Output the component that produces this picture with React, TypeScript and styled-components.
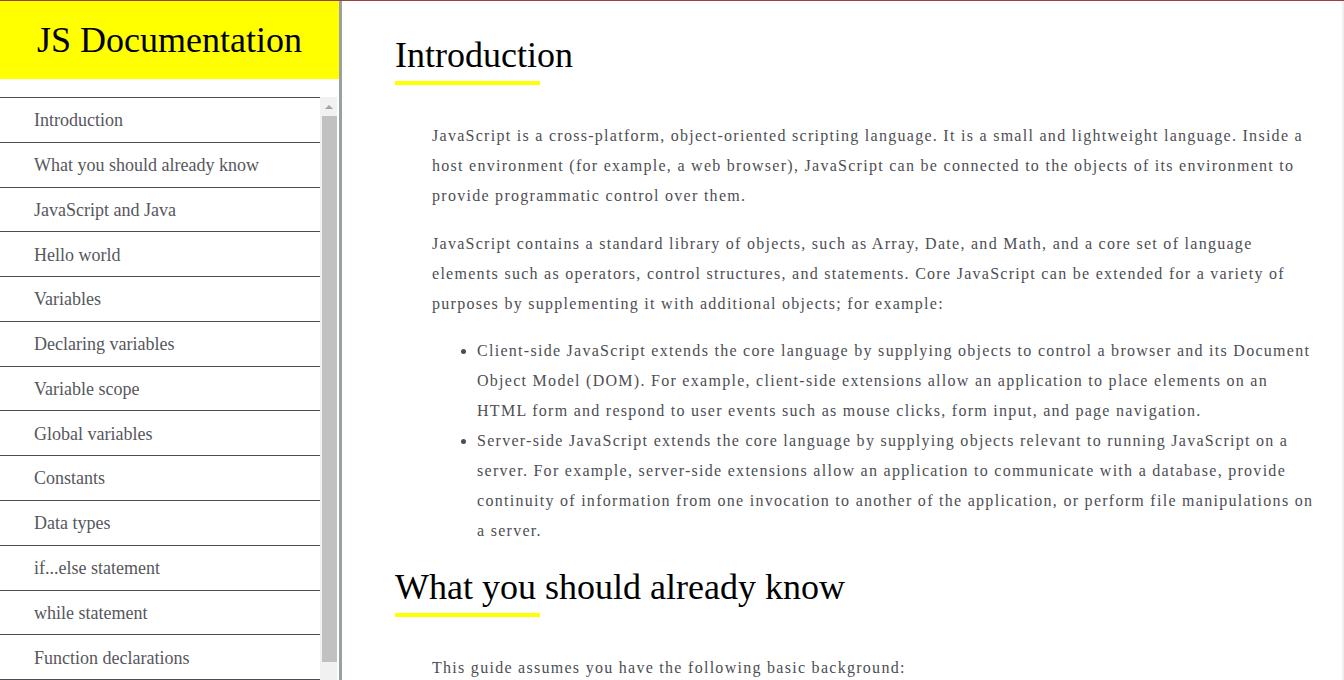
import React from "react";
import styled, { createGlobalStyle } from "styled-components";

const GlobalStyle = createGlobalStyle`
  html, body {
    margin: 0;
    padding: 0;
    overflow: hidden;
  }
  body {
    font-family: "Liberation Serif", "Times New Roman", serif;
    background: #fff;
  }
`;

const navLinks = [
  "Introduction",
  "What you should already know",
  "JavaScript and Java",
  "Hello world",
  "Variables",
  "Declaring variables",
  "Variable scope",
  "Global variables",
  "Constants",
  "Data types",
  "if...else statement",
  "while statement",
  "Function declarations",
  "Reference",
];

type Section = {
  title: string;
  paragraphs: string[];
  list?: string[];
};

const sections: Section[] = [
  {
    title: "Introduction",
    paragraphs: [
      "JavaScript is a cross-platform, object-oriented scripting language. It is a small and lightweight language. Inside a host environment (for example, a web browser), JavaScript can be connected to the objects of its environment to provide programmatic control over them.",
      "JavaScript contains a standard library of objects, such as Array, Date, and Math, and a core set of language elements such as operators, control structures, and statements. Core JavaScript can be extended for a variety of purposes by supplementing it with additional objects; for example:",
    ],
    list: [
      "Client-side JavaScript extends the core language by supplying objects to control a browser and its Document Object Model (DOM). For example, client-side extensions allow an application to place elements on an HTML form and respond to user events such as mouse clicks, form input, and page navigation.",
      "Server-side JavaScript extends the core language by supplying objects relevant to running JavaScript on a server. For example, server-side extensions allow an application to communicate with a database, provide continuity of information from one invocation to another of the application, or perform file manipulations on a server.",
    ],
  },
  {
    title: "What you should already know",
    paragraphs: ["This guide assumes you have the following basic background:"],
    list: [
      "A general understanding of the Internet and the World Wide Web (WWW).",
      "Good working knowledge of HyperText Markup Language (HTML).",
      "Some programming experience. If you are new to programming, try one of the tutorials linked on the main page about JavaScript.",
    ],
  },
];

const Page = styled.div`
  display: flex;
  height: 100vh;
  box-sizing: border-box;
  border-top: 1px solid #9e403b;
  overflow: hidden;
`;

const Sidebar = styled.nav`
  flex: 0 0 342px;
  box-sizing: border-box;
  border-right: 3px solid rgba(0, 22, 22, 0.4);
  display: flex;
  flex-direction: column;
  overflow: hidden;
`;

const Brand = styled.header`
  height: 78px;
  flex-shrink: 0;
  background: #ffff00;
  display: flex;
  align-items: center;
  justify-content: center;
  font-size: 36px;
  color: #000;
`;

const NavArea = styled.div`
  display: flex;
  margin-top: 18px;
  height: 602px;
  flex-shrink: 0;
`;

const NavList = styled.ul`
  list-style: none;
  margin: 0;
  padding: 0;
  width: 320px;
  overflow: hidden;
`;

const NavItem = styled.li`
  border-top: 1px solid #4d4e53;
`;

const NavLink = styled.a`
  display: block;
  padding: 12.2px 0 10.6px 34px;
  line-height: 21px;
  font-size: 18px;
  color: #56575c;
  text-decoration: none;
`;

const ScrollTrack = styled.div`
  width: 17px;
  background: #f1f1f1;
  display: flex;
  flex-direction: column;
`;

const ScrollButton = styled.div`
  height: 17px;
  display: flex;
  justify-content: center;
  padding-top: 8px;
  box-sizing: border-box;

  &::before {
    content: "";
    width: 0;
    height: 0;
    border-left: 4.5px solid transparent;
    border-right: 4.5px solid transparent;
    border-bottom: 4px solid #a3a3a3;
  }
`;

const ScrollThumb = styled.div`
  margin: 2px 0 0 2px;
  width: 15px;
  height: 546px;
  background: #c1c1c1;
`;

const Main = styled.main`
  flex: 1;
  min-width: 0;
  box-sizing: border-box;
  padding: 34px 24px 0 53px;
  border-right: 2px solid #f0f0f0;
  overflow: hidden;
`;

const DocSection = styled.section`
  margin-bottom: 21px;
`;

const Heading = styled.header`
  font-size: 36px;
  line-height: 41.4px;
  color: #000;

  &::after {
    content: "";
    display: block;
    width: 145px;
    height: 4px;
    margin-top: 4.6px;
    background: #ffff00;
  }
`;

const Body = styled.article`
  margin-top: 36px;
  padding-left: 37px;
  font-size: 16px;
  line-height: 30px;
  letter-spacing: 1.28px;
  color: #4d4e53;
`;

const Para = styled.p`
  margin: 0 0 17.5px;
`;

const Bullets = styled.ul`
  margin: 0;
  padding-left: 45px;
`;

export default function App() {
  return (
    <>
      <GlobalStyle />
      <Page>
        <Sidebar id="navbar">
          <Brand>JS Documentation</Brand>
          <NavArea>
            <NavList>
              {navLinks.map((label) => (
                <NavItem key={label}>
                  <NavLink href={`#${label.replace(/ /g, "_")}`}>{label}</NavLink>
                </NavItem>
              ))}
            </NavList>
            <ScrollTrack>
              <ScrollButton />
              <ScrollThumb />
            </ScrollTrack>
          </NavArea>
        </Sidebar>
        <Main id="main-doc">
          {sections.map((s) => (
            <DocSection key={s.title} id={s.title.replace(/ /g, "_")}>
              <Heading>{s.title}</Heading>
              <Body>
                {s.paragraphs.map((p, i) => (
                  <Para key={i}>{p}</Para>
                ))}
                {s.list && (
                  <Bullets>
                    {s.list.map((item, i) => (
                      <li key={i}>{item}</li>
                    ))}
                  </Bullets>
                )}
              </Body>
            </DocSection>
          ))}
        </Main>
      </Page>
    </>
  );
}
